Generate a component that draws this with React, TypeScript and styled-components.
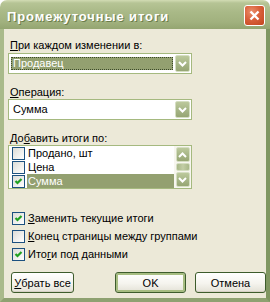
import React from 'react';
import styled, { createGlobalStyle } from 'styled-components';

const GlobalStyle = createGlobalStyle`
  body {
    margin: 0;
    background: #fff;
    font-family: 'Liberation Sans', Arial, sans-serif;
    font-size: 11px;
  }
`;

interface IItem {
  label: string;
  checked: boolean;
  selected?: boolean;
}

const items: IItem[] = [
  { label: 'Продано, шт', checked: false },
  { label: 'Цена', checked: false },
  { label: 'Сумма', checked: true, selected: true },
];

function Chevron({ up }: { up?: boolean }) {
  return (
    <svg width="9" height="6" viewBox="0 0 9 6">
      <polyline
        points={up ? '1,5 4.5,1.5 8,5' : '1,1 4.5,4.5 8,1'}
        fill="none"
        stroke="#fff"
        strokeWidth="2"
      />
    </svg>
  );
}

function CheckBox({ checked }: { checked: boolean }) {
  return (
    <Box>
      {checked && (
        <svg width="11" height="11" viewBox="0 0 11 11">
          <polyline points="2.5,5 4.5,7 8.5,3" fill="none" stroke="#21a121" strokeWidth="2.2" />
        </svg>
      )}
    </Box>
  );
}

export default function App() {
  return (
    <>
      <GlobalStyle />
      <Window>
        <TitleBar>
          <Title>Промежуточные итоги</Title>
          <CloseButton>
            <svg width="11" height="11" viewBox="0 0 11 11">
              <path d="M1.5 1.5 L9.5 9.5 M9.5 1.5 L1.5 9.5" stroke="#fff" strokeWidth="2.4" />
            </svg>
          </CloseButton>
        </TitleBar>
        <Frame>
          <Label>
            <u>П</u>ри каждом изменении в:
          </Label>
          <Combo $top={1}>
            <ComboValue $selected>Продавец</ComboValue>
            <DropButton>
              <Chevron />
            </DropButton>
          </Combo>
          <Label $top={12}>
            <u>О</u>перация:
          </Label>
          <Combo>
            <ComboValue>Сумма</ComboValue>
            <DropButton>
              <Chevron />
            </DropButton>
          </Combo>
          <Label $top={12}>
            До<u>б</u>авить итоги по:
          </Label>
          <ListBox>
            <Rows>
              {items.map((item) => (
                <Row key={item.label}>
                  <CheckBox checked={item.checked} />
                  <RowText $selected={item.selected}>{item.label}</RowText>
                </Row>
              ))}
            </Rows>
            <ScrollBar>
              <ScrollButton>
                <Chevron up />
              </ScrollButton>
              <Thumb />
              <ScrollButton>
                <Chevron />
              </ScrollButton>
            </ScrollBar>
          </ListBox>
          <Options>
            <Option>
              <CheckBox checked />
              <span>
                <u>З</u>аменить текущие итоги
              </span>
            </Option>
            <Option>
              <CheckBox checked={false} />
              <span>
                <u>К</u>онец страницы между группами
              </span>
            </Option>
            <Option>
              <CheckBox checked />
              <span>
                Ито<u>г</u>и под данными
              </span>
            </Option>
          </Options>
          <Buttons>
            <Button $width={64}>
              <u>У</u>брать все
            </Button>
            <Button $width={72} $default $gap={32}>
              OK
            </Button>
            <Button $width={72}>Отмена</Button>
          </Buttons>
        </Frame>
      </Window>
    </>
  );
}

const Window = styled.div`
  width: 270px;
  height: 302px;
  display: flex;
  flex-direction: column;
  border-radius: 7px 7px 0 0;
  overflow: hidden;
`;

const TitleBar = styled.div`
  height: 29px;
  box-sizing: border-box;
  display: flex;
  align-items: flex-start;
  justify-content: space-between;
  padding: 5px 5px 0 7px;
  background: linear-gradient(#d2dcb4 0, #b6c495 3px, #a9b987 12px, #a1b17e 22px, #94a571 29px);
`;

const Title = styled.div`
  margin-top: 4px;
  color: #fff;
  font-weight: bold;
  font-size: 13px;
  line-height: 16px;
  letter-spacing: 0.9px;
  text-shadow: 1px 1px 0 #6b7d4b;
`;

const CloseButton = styled.div`
  width: 21px;
  height: 21px;
  box-sizing: border-box;
  border: 1px solid #fff;
  border-radius: 3px;
  background: radial-gradient(circle at 35% 30%, #eb8f6c 0, #d9603a 45%, #c2451f 100%);
  display: flex;
  align-items: center;
  justify-content: center;
`;

const Frame = styled.div`
  flex: 1;
  display: flex;
  flex-direction: column;
  background: #ece9d8;
  border-left: 4px solid #a9ba8a;
  border-right: 4px solid #7f9661;
  border-bottom: 4px solid #8ea171;
  padding: 10px 0 0 4px;
`;

const Label = styled.div<{ $top?: number }>`
  margin-top: ${(p) => p.$top || 0}px;
  padding-left: 2px;
  line-height: 13px;
  color: #000;
`;

const Combo = styled.div<{ $top?: number }>`
  margin-top: ${(p) => p.$top || 0}px;
  width: 184px;
  height: 21px;
  box-sizing: border-box;
  border: 1px solid #a5b97f;
  background: #fff;
  padding: 1px;
  display: flex;
  align-items: center;
`;

const ComboValue = styled.div<{ $selected?: boolean }>`
  flex: 1;
  height: 13px;
  margin: 0 2px 0 1px;
  padding-left: 2px;
  line-height: 13px;
  color: ${(p) => (p.$selected ? '#fff' : '#000')};
  background: ${(p) => (p.$selected ? '#93a070' : 'transparent')};
  outline: ${(p) => (p.$selected ? '1px dotted #3c4a2a' : 'none')};
  outline-offset: -1px;
`;

const DropButton = styled.div`
  width: 15px;
  height: 17px;
  box-sizing: border-box;
  border: 1px solid #d5dec2;
  border-radius: 2px;
  background: linear-gradient(#bcc99c, #a4b384 60%, #97a674);
  display: flex;
  align-items: center;
  justify-content: center;
`;

const ListBox = styled.div`
  width: 184px;
  height: 44px;
  box-sizing: border-box;
  border: 1px solid #a5b97f;
  background: #fff;
  display: flex;
`;

const Rows = styled.div`
  flex: 1;
  display: flex;
  flex-direction: column;
`;

const Row = styled.div`
  height: 14px;
  display: flex;
  align-items: center;
  padding-left: 3px;
`;

const RowText = styled.div<{ $selected?: boolean }>`
  flex: 1;
  height: 14px;
  margin-left: 2px;
  padding-left: 1px;
  line-height: 14px;
  color: ${(p) => (p.$selected ? '#fff' : '#000')};
  background: ${(p) => (p.$selected ? '#93a070' : 'transparent')};
`;

const ScrollBar = styled.div`
  width: 17px;
  display: flex;
  flex-direction: column;
  align-items: center;
  justify-content: space-between;
  padding: 1px 0;
  box-sizing: border-box;
  background: #f7f6ef;
`;

const ScrollButton = styled(DropButton)`
  width: 14px;
  height: 15px;
`;

const Thumb = styled.div`
  width: 14px;
  height: 8px;
  margin-bottom: auto;
  margin-top: 1px;
  box-sizing: border-box;
  border: 1px solid #d5dec2;
  border-radius: 2px;
  background: linear-gradient(90deg, #a8b788, #c3cea6 50%, #a8b788);
`;

const Box = styled.span`
  width: 13px;
  height: 13px;
  box-sizing: border-box;
  border: 1px solid #1c5180;
  background: linear-gradient(135deg, #dcdcd7, #fff);
  display: inline-flex;
  align-items: center;
  justify-content: center;
  flex-shrink: 0;
`;

const Options = styled.div`
  margin-top: 23px;
  padding-left: 4px;
  display: flex;
  flex-direction: column;
  gap: 5px;
`;

const Option = styled.div`
  height: 13px;
  display: flex;
  align-items: center;
  gap: 3px;
  line-height: 13px;
`;

const Buttons = styled.div`
  margin-top: 11px;
  padding-left: 3px;
  display: flex;
  gap: 9px;
`;

const Button = styled.div<{ $width: number; $default?: boolean; $gap?: number }>`
  width: ${(p) => p.$width}px;
  height: 21px;
  margin-left: ${(p) => p.$gap || 0}px;
  box-sizing: border-box;
  border: 1px solid #3d5c2c;
  border-radius: 3px;
  background: linear-gradient(#fff, #f5f4ee 55%, #e3e1d6);
  box-shadow: ${(p) => (p.$default ? 'inset 0 0 0 2px #a7bd82' : 'inset 0 -1px 0 #d6d0c5')};
  display: flex;
  align-items: center;
  justify-content: center;
  color: #000;
`;
